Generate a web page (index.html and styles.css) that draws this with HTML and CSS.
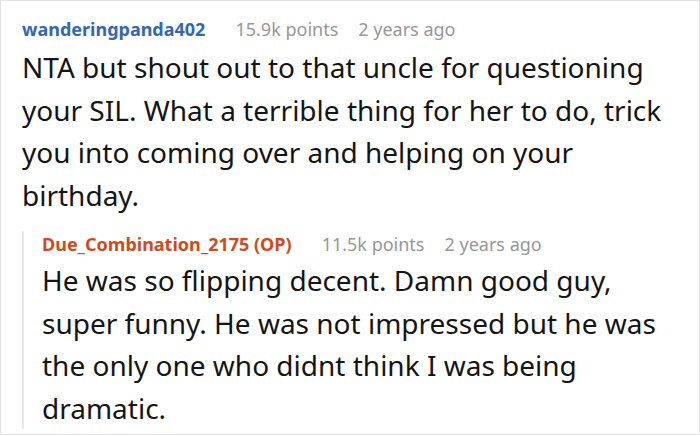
FILE: index.html
```html
<!DOCTYPE html>
<html>
<head>
<meta charset="utf-8">
<link rel="stylesheet" href="styles.css">
</head>
<body>
<div class="thread">
  <div class="comment">
    <div class="meta">
      <span class="author">wanderingpanda402</span>
      <span class="info">15.9k points</span>
      <span class="info">2 years ago</span>
    </div>
    <p class="text">NTA but shout out to that uncle for questioning your SIL. What a terrible thing for her to do, trick you into coming over and helping on your birthday.</p>
    <div class="reply">
      <div class="meta">
        <span class="author op">Due_Combination_2175 (OP)</span>
        <span class="info">11.5k points</span>
        <span class="info">2 years ago</span>
      </div>
      <p class="text">He was so flipping decent. Damn good guy, super funny. He was not impressed but he was the only one who didnt think I was being dramatic.</p>
    </div>
  </div>
</div>
</body>
</html>
```

FILE: styles.css
```css
html, body {
  margin: 0;
  padding: 0;
  background: #ffffff;
}
body {
  font-family: "Noto Sans", "DejaVu Sans", sans-serif;
  width: 700px;
  height: 436px;
  overflow: hidden;
}
.thread {
  box-sizing: border-box;
  width: 700px;
  height: 435px;
  border: 1px solid #e3e3e3;
  padding: 15px 20px 0 21px;
}
.meta {
  display: flex;
  align-items: baseline;
  font-size: 18px;
  line-height: 26px;
  white-space: nowrap;
}
.author {
  font-weight: 700;
  color: #3367b4;
  margin-right: 30px;
}
.author.op {
  color: #d14a1b;
}
.info {
  color: #979797;
  margin-right: 20px;
}
.text {
  margin: 4px 0 0 0;
  font-size: 28px;
  line-height: 42.5px;
  color: #151515;
}
.reply {
  margin-top: 24px;
  border-left: 2px solid #e8e8e8;
  padding-left: 18px;
}
.reply .meta {
  margin-top: -9px;
}
.reply .text {
  margin-top: 2px;
  margin-bottom: -6px;
}
```
